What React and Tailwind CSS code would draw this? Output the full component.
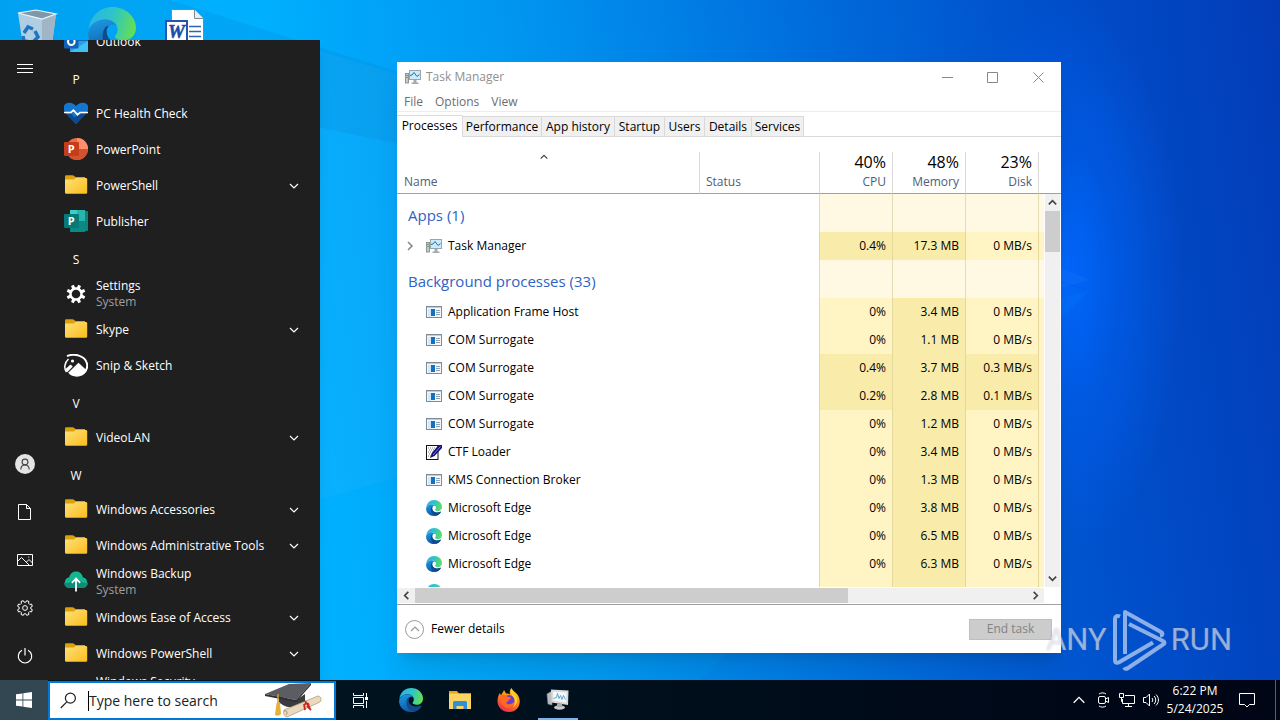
import React from 'react';

const gearPath = (c, outer, inner, teeth) => {
  const step = (Math.PI * 2) / teeth;
  const at = (r, a) => `${(c + r * Math.cos(a)).toFixed(2)} ${(c + r * Math.sin(a)).toFixed(2)}`;
  let d = '';
  for (let i = 0; i < teeth; i++) {
    const a = i * step + step / 2;
    d += `${i ? 'L' : 'M'}${at(inner, a - step * 0.3)}L${at(outer, a - step * 0.2)}L${at(outer, a + step * 0.2)}L${at(inner, a + step * 0.3)}`;
  }
  return `${d}Z`;
};

const Chevron = ({ dir = 'down', className = 'size-3', width = 1.2 }) => {
  const paths = {
    down: 'M2 4l4 4 4-4',
    up: 'M2 8l4-4 4 4',
    left: 'M8 2L4 6l4 4',
    right: 'M4 2l4 4-4 4',
  };
  return (
    <svg viewBox="0 0 12 12" className={className} fill="none" stroke="currentColor" strokeWidth={width} aria-hidden="true">
      <path d={paths[dir]} />
    </svg>
  );
};

const EdgeIcon = ({ id, className }) => (
  <svg viewBox="0 0 24 24" className={className} aria-hidden="true">
    <defs>
      <linearGradient id={`${id}-top`} x1="0" y1="0.4" x2="1" y2="0.6">
        <stop offset="0" stopColor="#2bb4e8" />
        <stop offset="0.5" stopColor="#2fc6c4" />
        <stop offset="1" stopColor="#66e04e" />
      </linearGradient>
      <linearGradient id={`${id}-mid`} x1="0" y1="0" x2="0.4" y2="1">
        <stop offset="0" stopColor="#1f9be4" />
        <stop offset="1" stopColor="#0c59a8" />
      </linearGradient>
    </defs>
    <path d="M0.3 11.2C1 4.6 6 0 12.2 0 18.8 0 24 4.800 24 10.400c0 4-2.900 6.300-6.300 6.300-2.700 0-4.200-1-4.200-1.900 0-.7 1.300-1.200 1.300-3.400C14.800 8.500 12 6.300 8.600 6.300 4.700 6.300 1.400 8.600.3 11.200z" fill={`url(#${id}-top)`} />
    <path d="M8.600 6.300C4.400 6.300.5 9.200.1 13 0 19 5 24 12 24c4.500 0 8.300-2.400 10.200-5.600.4-.6-.2-.9-.7-.6-4.600 2.500-12.200.3-12.200-5.500 0-1.600.8-2.600 1.800-3.200C12.600 8.200 14 9 14.500 10 13.900 7.900 11.700 6.300 8.600 6.300z" fill={`url(#${id}-mid)`} />
    <path d="M9.200 9.600C6.200 12 6.300 21.500 14 23.800c3.500-.4 6.500-2.600 8.200-5.400.4-.6-.2-.9-.7-.6-4.600 2.500-12.200.3-12.200-5.500 0-1.200.4-2.100 1.100-2.700z" fill="#114a8b" />
  </svg>
);

const FolderIcon = ({ id }) => (
  <svg viewBox="0 0 24 24" className="size-6" aria-hidden="true">
    <defs>
      <linearGradient id={id} x1="0" y1="0" x2="1" y2="1">
        <stop offset="0" stopColor="#ffe07a" />
        <stop offset="1" stopColor="#f9bd1b" />
      </linearGradient>
    </defs>
    <path d="M1 2.500a1.200 1.200 0 0 1 1.200-1.200h6.300c1.500 0 2 1.700 3.500 1.700H21v6H1z" fill="#d9a20a" />
    <path d="M1 5.500h8.500c1 0 1.300-1.500 2.700-1.500H22a1.200 1.200 0 0 1 1.200 1.200v13.300A1.200 1.200 0 0 1 22 19.700H2.200A1.200 1.200 0 0 1 1 18.500z" fill={`url(#${id})`} />
  </svg>
);

const OutlookIcon = () => (
  <svg viewBox="0 0 24 24" className="size-6" aria-hidden="true">
    <rect x="6" y="1" width="18" height="14" fill="#0f6cbd" />
    <path d="M6 11h18v11H6z" fill="#2a9fe8" />
    <path d="M6 22L24 11v11z" fill="#50d9ff" opacity="0.6" />
    <rect x="0" y="5" width="14.500" height="13.500" rx="1" fill="#0f62b5" />
    <circle cx="7.300" cy="11.700" r="3.300" fill="none" stroke="#fff" strokeWidth="2" />
  </svg>
);

const HealthIcon = () => (
  <svg viewBox="0 0 24 24" className="size-6" aria-hidden="true">
    <path d="M12 22L1.800 11.500C-2.200 6-.3 1 5 .8 8 .7 10.500 2 12 4c1.500-2 4-3.300 7-3.200C24.300 1 26.200 6 22.200 11.500z" fill="#1476cf" />
    <path d="M2.500 12h5l3 3.500 4.500-4h7L12 22z" fill="#0c4b93" />
    <path d="M0 10.500h7l2.500-2.300 4 4.500 2.500-2.200H24" fill="none" stroke="#fff" strokeWidth="1.700" />
  </svg>
);

const PowerPointIcon = () => (
  <svg viewBox="0 0 24 24" className="size-6" aria-hidden="true">
    <circle cx="13" cy="11" r="11" fill="#ed6c47" />
    <path d="M13 0a11 11 0 0 1 11 11H13z" fill="#ff8f6b" />
    <path d="M2 11h22a11 11 0 0 1-22 0z" fill="#d35230" />
    <rect x="0" y="4" width="15" height="14" rx="1" fill="#c43e1c" />
    <text x="7.200" y="15" textAnchor="middle" fontSize="11" fontWeight="700" fill="#fff">P</text>
  </svg>
);

const PublisherIcon = () => (
  <svg viewBox="0 0 24 24" className="size-6" aria-hidden="true">
    <rect x="16" y="1" width="8" height="20" rx="1" fill="#12827c" />
    <rect x="6" y="0" width="15" height="11" fill="#3ad0c9" />
    <rect x="13" y="0" width="8" height="11" fill="#27b6ae" />
    <rect x="6" y="11" width="15" height="11" fill="#0b8a84" />
    <rect x="0" y="4" width="15" height="14" rx="1" fill="#067a76" />
    <text x="7.200" y="15" textAnchor="middle" fontSize="11" fontWeight="700" fill="#fff">P</text>
  </svg>
);

const SettingsAppIcon = () => (
  <svg viewBox="0 0 24 24" className="size-6" aria-hidden="true">
    <path d={`${gearPath(12, 9.5, 6.8, 8)}M16.300 12a4.300 4.300 0 1 0-8.600 0 4.300 4.300 0 1 0 8.600 0z`} fill="#fff" fillRule="evenodd" />
  </svg>
);

const SnipIcon = () => (
  <svg viewBox="0 0 24 24" className="size-6" aria-hidden="true">
    <path d="M3 2.200C10-1 21 1.500 23 9.500c.8 4-1.400 8-4 10" fill="none" stroke="#fff" strokeWidth="2" />
    <path d="M4.500 5C.3 8.800-.3 14.300 2.500 18" fill="none" stroke="#fff" strokeWidth="1.500" />
    <circle cx="8.500" cy="7" r="1.600" fill="#fff" />
    <path d="M1.500 15l5-4.500 2.300 2-5.600 5.700zM4.200 18.800l10.300-10 8.300 7.700c-3.500 7.500-14 8-18.600 2.300z" fill="#fff" />
  </svg>
);

const BackupIcon = () => (
  <svg viewBox="0 0 24 24" className="size-6" aria-hidden="true">
    <path d="M5.500 18a5.500 5.500 0 0 1-.3-10.800C6.200 3.500 8.700 1.500 12 1.500s6 2 6.800 5.700A5.500 5.500 0 0 1 18.500 18z" fill="#14b58f" />
    <path d="M0 12.500c7 2.500 8-4 12-4s6 6.500 12 4c0 3.500-2.500 5.500-5.500 5.500h-13C2.500 18 0 16 0 12.500z" fill="#0b8d78" />
    <path d="M12 21.500V9M7.800 12.800L12 8.600l4.200 4.200" fill="none" stroke="#fff" strokeWidth="1.800" />
  </svg>
);

const TaskManagerIcon = ({ className = 'size-4' }) => (
  <svg viewBox="0 0 16 16" className={className} aria-hidden="true">
    <rect x="0.500" y="4.500" width="3" height="9.500" fill="#c6cbc6" stroke="#7d8580" strokeWidth="0.800" />
    <path d="M1 6.500h2M1 8.500h2" stroke="#5f8f5f" strokeWidth="0.800" />
    <rect x="4.500" y="1.500" width="11" height="9" fill="#eaf5fb" stroke="#9aa5ad" />
    <rect x="5" y="2" width="10" height="8" fill="#cdeafa" />
    <path d="M5 6.500l2-.5 2-2.500 3 4 2.500-2" fill="none" stroke="#1878a8" />
    <path d="M8.500 11h3v2.500h2v1.500h-7v-1.500h2z" fill="#a3abb0" />
  </svg>
);

const ProcessIcon = () => (
  <svg viewBox="0 0 16 16" className="size-4" shapeRendering="crispEdges" aria-hidden="true">
    <rect x="0.500" y="2.500" width="15" height="11" fill="#f2f8fc" stroke="#7f8c96" />
    <rect x="1" y="3" width="14" height="1" fill="#c3ced6" />
    <rect x="2" y="5" width="3" height="8" fill="#d3e9f8" />
    <rect x="5" y="5" width="4" height="7" fill="#1470c0" />
    <path d="M10 6.500h4M10 8.500h4M10 10.500h4" stroke="#8fa1ae" />
  </svg>
);

const CtfIcon = () => (
  <svg viewBox="0 0 16 16" className="size-4" aria-hidden="true">
    <rect x="0.500" y="1.500" width="11.500" height="14" fill="#fff" stroke="#111" />
    <path d="M2 4h8M3 6h6M2 8h6M3 10h3M2 12h3" stroke="#555" strokeWidth="0.800" strokeDasharray="1 1" />
    <path d="M4 14l2-5L12.500 1H16v3L8.500 12z" fill="#10107c" />
    <path d="M7 11l7.500-8.500" stroke="#9a9ee0" strokeWidth="0.800" />
  </svg>
);

const menuItems = [
  { label: 'Outlook', icon: <OutlookIcon /> },
  { header: 'P' },
  { label: 'PC Health Check', icon: <HealthIcon /> },
  { label: 'PowerPoint', icon: <PowerPointIcon /> },
  { label: 'PowerShell', folder: true },
  { label: 'Publisher', icon: <PublisherIcon /> },
  { header: 'S' },
  { label: 'Settings', sub: 'System', icon: <SettingsAppIcon /> },
  { label: 'Skype', folder: true },
  { label: 'Snip & Sketch', icon: <SnipIcon /> },
  { header: 'V' },
  { label: 'VideoLAN', folder: true },
  { header: 'W' },
  { label: 'Windows Accessories', folder: true },
  { label: 'Windows Administrative Tools', folder: true },
  { label: 'Windows Backup', sub: 'System', icon: <BackupIcon /> },
  { label: 'Windows Ease of Access', folder: true },
  { label: 'Windows PowerShell', folder: true },
  { label: 'Windows Security', sub: 'System' },
];

const railIcons = [
  {
    label: 'Account',
    icon: (
      <svg viewBox="0 0 20 20" className="size-5" aria-hidden="true">
        <circle cx="10" cy="10" r="10" fill="#e4e4e4" />
        <g fill="none" stroke="#444" strokeWidth="1.100">
          <circle cx="10" cy="8" r="2.900" />
          <path d="M5.800 15.500c.2-6 8.200-6 8.400 0" />
        </g>
      </svg>
    ),
  },
  {
    label: 'Documents',
    icon: (
      <svg viewBox="0 0 16 16" className="size-4" fill="none" stroke="#fff" aria-hidden="true">
        <path d="M1.500.5h8l4 4v11h-12zM9.500.5v4h4" />
      </svg>
    ),
  },
  {
    label: 'Pictures',
    icon: (
      <svg viewBox="0 0 16 16" className="size-4" fill="none" stroke="#fff" aria-hidden="true">
        <path d="M.5 2.500h15v11H.5zM.5 9.500l4-4 7.500 7.500M9.500 10l2.500-2.500 3.500 3.500" />
        <circle cx="11.800" cy="5" r="0.600" fill="#fff" stroke="none" />
      </svg>
    ),
  },
  {
    label: 'Settings',
    icon: (
      <svg viewBox="0 0 16 16" className="size-4" fill="none" stroke="#fff" aria-hidden="true">
        <path d={gearPath(8, 7.6, 5.9, 8)} />
        <circle cx="8" cy="8" r="2.400" />
      </svg>
    ),
  },
  {
    label: 'Power',
    icon: (
      <svg viewBox="0 0 16 16" className="size-4" fill="none" stroke="#fff" strokeWidth="1.200" aria-hidden="true">
        <path d="M8 0v7.500M5 2.300a6.700 6.700 0 1 0 6 0" />
      </svg>
    ),
  },
];

const StartMenu = () => (
  <nav aria-label="Start" className="absolute bottom-0 left-0 top-10 flex w-80 bg-[#1f1f1f] text-xs text-white shadow-lg">
    <div className="flex w-12 flex-col">
      <button aria-label="Expand" className="flex h-[58px] w-[50px] items-center justify-center">
        <svg viewBox="0 0 16 10" className="h-[10px] w-4" stroke="#fff" aria-hidden="true">
          <path d="M0 .5h16M0 4.500h16M0 8.500h16" />
        </svg>
      </button>
      <div className="mt-auto">
        {railIcons.map((item) => (
          <button key={item.label} aria-label={item.label} className="flex h-12 w-[50px] items-center justify-center">
            {item.icon}
          </button>
        ))}
      </div>
    </div>
    <div className="min-w-0 flex-1 overflow-hidden">
      <ul className="-mt-4">
        {menuItems.map((item) => (
          <li key={item.header || item.label} className="h-9">
            {item.header ? (
              <button className="flex h-9 w-14 items-center justify-center pt-1">{item.header}</button>
            ) : (
              <button className="flex h-9 w-full items-center gap-2 pl-4 pr-5 text-left">
                <span className="size-6">{item.folder ? <FolderIcon id={`folder-${item.label.replace(/ /g, '-')}`} /> : item.icon}</span>
                <span className="flex-1 whitespace-nowrap leading-4">
                  {item.label}
                  {item.sub && <span className="block text-[#9f9f9f]">{item.sub}</span>}
                </span>
                {item.folder && <Chevron />}
              </button>
            )}
          </li>
        ))}
      </ul>
    </div>
  </nav>
);

const tabs = [
  { label: 'Performance', width: 'w-[79px]' },
  { label: 'App history', width: 'w-[73px]' },
  { label: 'Startup', width: 'w-[50px]' },
  { label: 'Users', width: 'w-[40px]' },
  { label: 'Details', width: 'w-[47px]' },
  { label: 'Services', width: 'w-[52px]' },
];

const processes = [
  { name: 'Application Frame Host', cpu: '0%', memory: '3.4 MB', disk: '0 MB/s' },
  { name: 'COM Surrogate', cpu: '0%', memory: '1.1 MB', disk: '0 MB/s' },
  { name: 'COM Surrogate', cpu: '0.4%', memory: '3.7 MB', disk: '0.3 MB/s' },
  { name: 'COM Surrogate', cpu: '0.2%', memory: '2.8 MB', disk: '0.1 MB/s' },
  { name: 'COM Surrogate', cpu: '0%', memory: '1.2 MB', disk: '0 MB/s' },
  { name: 'CTF Loader', icon: 'ctf', cpu: '0%', memory: '3.4 MB', disk: '0 MB/s' },
  { name: 'KMS Connection Broker', cpu: '0%', memory: '1.3 MB', disk: '0 MB/s' },
  { name: 'Microsoft Edge', icon: 'edge', cpu: '0%', memory: '3.8 MB', disk: '0 MB/s' },
  { name: 'Microsoft Edge', icon: 'edge', cpu: '0%', memory: '6.5 MB', disk: '0 MB/s' },
  { name: 'Microsoft Edge', icon: 'edge', cpu: '0%', memory: '6.3 MB', disk: '0 MB/s' },
  { name: '', icon: 'edge', cpu: '', memory: '', disk: '' },
];

const heat = (value) => (value.startsWith('0 ') || value === '0%' || value === '' ? 'bg-[#fff4c4]' : 'bg-[#f9ecaa]');

const ProcessRow = ({ process, index, expandable }) => (
  <tr className="h-7">
    <td colSpan={2} className="p-0">
      <div className="flex items-center pl-[7px]">
        <span className="w-[22px] text-[#8a8a8a]">{expandable && <Chevron dir="right" width={1.6} />}</span>
        <span className="mr-[6px]">
          {process.icon === 'edge' && <EdgeIcon id={`edge-${index}`} className="size-4" />}
          {process.icon === 'ctf' && <CtfIcon />}
          {process.icon === 'taskmgr' && <TaskManagerIcon />}
          {!process.icon && <ProcessIcon />}
        </span>
        {process.name}
      </div>
    </td>
    <td className={`border-l border-[#e6d79c] p-0 pr-[6px] text-right ${heat(process.cpu)}`}>{process.cpu}</td>
    <td className="border-l border-[#e6d79c] bg-[#f9ecaa] p-0 pr-[6px] text-right">{process.memory}</td>
    <td className={`border-l border-[#e6d79c] p-0 pr-[6px] text-right ${heat(process.disk)}`}>{process.disk}</td>
    <td className="border-l border-[#e6d79c] bg-[#fff4c4] p-0" />
  </tr>
);

const GroupRow = ({ title }) => (
  <tr className="h-[38px]">
    <th colSpan={2} scope="colgroup" className="p-0 pl-[11px] pt-[3px] text-left text-[15px] font-normal leading-5 text-[#2f62c4]">{title}</th>
    {[0, 1, 2, 3].map((i) => (
      <td key={i} className="border-l border-[#e6dcb4] bg-[#fff8e3] p-0" />
    ))}
  </tr>
);

const TaskManager = () => (
  <section aria-label="Task Manager" className="absolute left-[397px] top-[62px] flex h-[591px] w-[664px] flex-col bg-white text-xs text-black shadow-xl">
    <div className="flex h-[30px] items-center pl-2 text-[#8f8f8f]">
      <TaskManagerIcon />
      <h1 className="ml-[5px] flex-1">Task Manager</h1>
      <button aria-label="Minimize" className="flex h-7 w-[45px] items-center justify-center">
        <svg viewBox="0 0 11 11" className="size-[11px]" stroke="#888" aria-hidden="true"><path d="M0 5.500h11" /></svg>
      </button>
      <button aria-label="Maximize" className="flex h-7 w-[45px] items-center justify-center">
        <svg viewBox="0 0 11 11" className="size-[11px]" fill="none" stroke="#888" aria-hidden="true"><path d="M.5.500h10v10H.5z" /></svg>
      </button>
      <button aria-label="Close" className="flex h-7 w-[46px] items-center justify-center">
        <svg viewBox="0 0 11 11" className="size-[11px]" stroke="#888" aria-hidden="true"><path d="M.5.500l10 10M10.500.500l-10 10" /></svg>
      </button>
    </div>
    <div className="flex h-5 items-center gap-3 border-b border-[#ececec] pl-[7px] text-[#6d6d6d]">
      <button>File</button>
      <button>Options</button>
      <button>View</button>
    </div>
    <div role="tablist" className="flex h-[25px] items-end">
      <button role="tab" aria-selected="true" className="flex h-[22px] w-[66px] items-center justify-center self-start border-r border-t border-[#dcdcdc] pb-[2px] mt-[3px]">Processes</button>
      {tabs.map((tab) => (
        <button key={tab.label} role="tab" aria-selected="false" className={`flex h-[21px] items-center justify-center border border-l-0 border-[#d9d9d9] bg-[#f0f0f0] ${tab.width}`}>
          {tab.label}
        </button>
      ))}
      <div className="flex-1 border-b border-[#d9d9d9]" />
    </div>
    <div className="flex min-h-0 flex-1">
      <div className="min-w-0 flex-1 overflow-hidden pt-[15px]">
        <table className="w-full table-fixed border-separate border-spacing-0">
          <colgroup>
            <col />
            <col className="w-[120px]" />
            <col className="w-[73px]" />
            <col className="w-[73px]" />
            <col className="w-[73px]" />
            <col className="w-[6px]" />
          </colgroup>
          <thead>
            <tr className="h-[42px] text-[#4c607a]">
              <th scope="col" className="border-b border-[#a0a0a0] p-0 pl-[7px] text-left align-top font-normal">
                <span className="flex h-5 justify-center pr-4 text-[#444]"><Chevron dir="up" className="size-[10px]" width={1.5} /></span>
                <span className="block leading-5">Name</span>
              </th>
              <th scope="col" className="border-b border-l border-b-[#a0a0a0] border-l-[#d9d9d9] p-0 pl-[6px] pt-5 text-left align-top font-normal leading-5">Status</th>
              {[['40%', 'CPU'], ['48%', 'Memory'], ['23%', 'Disk']].map(([total, label]) => (
                <th key={label} scope="col" className="border-b border-l border-b-[#a0a0a0] border-l-[#d9d9d9] p-0 pr-[6px] text-right align-top font-normal leading-5">
                  <span className="block text-base leading-5 text-black">{total}</span>
                  <span className="block">{label}</span>
                </th>
              ))}
              <td className="border-b border-l border-b-[#a0a0a0] border-l-[#d9d9d9] p-0" />
            </tr>
          </thead>
          <tbody>
            <GroupRow title="Apps (1)" />
            <ProcessRow expandable index="app" process={{ name: 'Task Manager', icon: 'taskmgr', cpu: '0.4%', memory: '17.3 MB', disk: '0 MB/s' }} />
            <GroupRow title="Background processes (33)" />
            {processes.map((process, index) => (
              <ProcessRow key={index} index={index} process={process} />
            ))}
          </tbody>
        </table>
      </div>
      <div className="flex w-[17px] flex-col">
        <div className="h-[57px] border-b border-[#a0a0a0]" />
        <div className="mx-px flex flex-1 flex-col bg-[#f0f0f0] text-[#444]">
          <button aria-label="Scroll up" className="flex h-[17px] items-center justify-center"><Chevron dir="up" width={1.8} className="size-[11px]" /></button>
          <div className="h-[41px] bg-[#cdcdcd]" />
          <button aria-label="Scroll down" className="mt-auto flex h-[17px] items-center justify-center"><Chevron width={1.8} className="size-[11px]" /></button>
        </div>
      </div>
    </div>
    <div className="flex h-[17px] border-t border-white pb-px pr-[17px] text-[#444]">
      <button aria-label="Scroll left" className="flex w-[18px] items-center justify-center bg-[#f0f0f0]"><Chevron dir="left" width={1.8} className="size-[11px]" /></button>
      <div className="w-[433px] bg-[#cdcdcd]" />
      <button aria-label="Scroll right" className="flex flex-1 items-center justify-end bg-[#f0f0f0] pr-[3px]"><Chevron dir="right" width={1.8} className="size-[11px]" /></button>
    </div>
    <div className="flex h-[49px] items-center justify-between border-t border-[#a0a0a0] pl-2 pr-[9px]">
      <button className="flex items-center gap-[7px]">
        <span className="flex size-[19px] items-center justify-center rounded-full border border-[#999] text-[#999]"><Chevron dir="up" /></span>
        Fewer details
      </button>
      <button disabled className="h-[21px] w-[83px] border border-[#bfbfbf] bg-[#cccccc] text-[#838383]">End task</button>
    </div>
  </section>
);

const DesktopIcons = () => (
  <div className="absolute left-0 top-0 flex">
    <a href="#recycle-bin" aria-label="Recycle Bin" className="flex w-[74px] justify-center pt-[7px]">
      <svg viewBox="0 0 48 48" className="size-12" aria-hidden="true">
        <path d="M5 6l38 1-5 38H11z" fill="#c3d3df" opacity="0.900" />
        <path d="M29 12l14-5-5 38-9 2z" fill="#9fb4c4" opacity="0.900" />
        <path d="M5 6l18-3 20 4-14 5z" fill="#7d98ab" stroke="#eef5fa" strokeWidth="1.200" />
        <g fill="none" stroke="#1f74c4" strokeWidth="3.500">
          <path d="M11 26l4-6 5 2M22 24l3 6-4 4M17 35l-6-1-1-5" />
        </g>
      </svg>
    </a>
    <a href="#edge" aria-label="Microsoft Edge" className="flex w-[76px] justify-center pt-[7px]">
      <EdgeIcon id="edge-desktop" className="size-12" />
    </a>
    <a href="#document" aria-label="Word document" className="flex w-[68px] justify-center pt-[7px]">
      <svg viewBox="0 0 48 48" className="size-12" aria-hidden="true">
        <path d="M11.500 2.500h23l9 9v34h-32z" fill="#fff" stroke="#7d8790" />
        <path d="M34.500 2.500v9h9" fill="#e8edf2" stroke="#7d8790" />
        <path d="M29 19.500h12M29 24.500h12M29 29.500h12" stroke="#2b65b8" strokeWidth="1.500" />
        <rect x="6" y="14" width="21" height="21" fill="#fff" stroke="#2456b0" strokeWidth="2" />
        <text x="16.500" y="31" textAnchor="middle" fontSize="19" fontWeight="700" fontStyle="italic" fontFamily="Liberation Serif, serif" fill="#1c4aa8" stroke="#1c4aa8" strokeWidth="0.500">W</text>
      </svg>
    </a>
  </div>
);

const Watermark = () => (
  <div className="pointer-events-none absolute bottom-2 right-12 flex items-center gap-1 font-[Roboto,sans-serif] text-[31px] text-white/55 [text-shadow:0_0_2px_rgba(80,90,120,0.35)]">
    <span>ANY</span>
    <svg viewBox="0 0 56 64" className="h-16 w-14" fill="none" stroke="currentColor" strokeWidth="4" strokeLinejoin="round" aria-hidden="true">
      <path d="M9 8.500C6 7 4 8.500 4 11v41c0 3 2 3.500 4.500 2L42 34.500M14 46V4l36 20c2 1.200 2 3-1 3.500M18 16l34 17c2 1 2 2.500 0 3.500L17 60c-1.500 1-3 1-4-.5" />
    </svg>
    <span>RUN</span>
  </div>
);

const Taskbar = () => (
  <footer className="flex h-10 bg-linear-to-r from-[#001822] to-[#000616] text-xs text-white">
    <button aria-label="Start" className="flex w-12 items-center justify-center bg-[#324752]">
      <svg viewBox="0 0 16 16" className="size-4" fill="#fff" aria-hidden="true">
        <path d="M0 2.300l6.500-.9v6.200H0zM7.300 1.300L16 0v7.600H7.300zM0 8.400h6.500v6.200L0 13.700zM7.300 8.400H16V16l-8.700-1.200z" />
      </svg>
    </button>
    <label className="mt-px flex w-72 items-center border-2 border-[#0078d7] bg-white pl-[10px] pr-[10px] text-black">
      <svg viewBox="0 0 18 18" className="size-[17px] shrink-0" fill="none" stroke="#222" strokeWidth="1.300" aria-hidden="true">
        <circle cx="11" cy="6.500" r="5.300" />
        <path d="M7.200 10.500L.8 17" />
      </svg>
      <span className="ml-[11px] h-5 w-px bg-black" />
      <input type="text" aria-label="Search" placeholder="Type here to search" className="min-w-0 flex-1 text-sm text-black outline-none placeholder:text-[#222]" />
      <svg viewBox="0 0 60 36" className="h-9 w-[60px] shrink-0" aria-hidden="true">
        <path d="M15 13l16 5 10-7v9c-6 6-20 6-26-1z" fill="#3b3c40" />
        <path d="M1 11L25 1l22-1-15 17z" fill="#5c5d62" />
        <path d="M1 11l31 6 15-17v2L32 19 1 13z" fill="#2f3034" />
        <path d="M14 11v11" stroke="#d49c25" strokeWidth="1.500" />
        <path d="M12.500 20h3.500l1 11c-2 2-4 2-6 1z" fill="#e6b13a" />
        <path d="M20 27l34-14c3 0 4 4 2 6L23 34c-3 0-4-5-3-7z" fill="#ead9bf" stroke="#b79d79" strokeWidth="0.800" />
        <path d="M20 28c3-1 4 2 2 4" fill="none" stroke="#a58a66" />
        <path d="M41 18l5 7M40 22c3-3 6-1 4 1M40 21l1 6M43 23l4 4" fill="none" stroke="#c8281e" strokeWidth="1.800" />
      </svg>
    </label>
    <div className="flex gap-px">
      <button aria-label="Task view" className="flex w-[50px] items-center justify-center">
        <svg viewBox="0 0 16 16" className="size-4" fill="none" stroke="#fff" aria-hidden="true">
          <path d="M.5 1v2.500h10V1M.5 5.500h10v6H.5zM.5 16v-2.500h10V16M13.500 1v4M13.500 9v7" />
          <rect x="12" y="5" width="3" height="3" fill="#fff" stroke="none" />
        </svg>
      </button>
      <button aria-label="Microsoft Edge" className="flex w-12 items-center justify-center">
        <EdgeIcon id="edge-taskbar" className="size-6" />
      </button>
      <button aria-label="File Explorer" className="flex w-12 items-center justify-center">
        <svg viewBox="0 0 24 24" className="size-6" aria-hidden="true">
          <path d="M1 3h8l2 2.500h12V9H1z" fill="#f0a30a" />
          <path d="M1 5.500h22v15.500H1z" fill="#fcd462" />
          <path d="M5 21v-6.500A1.500 1.500 0 0 1 6.500 13h11a1.500 1.500 0 0 1 1.500 1.500V21h-3.500v-3h-7v3z" fill="#2f8fd8" />
        </svg>
      </button>
      <button aria-label="Firefox" className="flex w-12 items-center justify-center">
        <svg viewBox="0 0 24 24" className="size-6" aria-hidden="true">
          <defs>
            <linearGradient id="fox-body" x1="0.800" y1="0" x2="0.300" y2="1">
              <stop offset="0" stopColor="#ffe226" />
              <stop offset="0.450" stopColor="#ff8a16" />
              <stop offset="1" stopColor="#f0274f" />
            </linearGradient>
          </defs>
          <path d="M14.500 0c1 3 3.500 3.500 5.500 6 5.500 6.500 2.500 18-8 18C5 24 .5 19 .5 13c0-3.500 1-6 2.500-8l1 2.500C5 4.500 6.500 4 7 2l2 3.500c2 0 3 .5 4 1-.5-2.500 0-5 1.500-6.500z" fill="url(#fox-body)" />
          <circle cx="12" cy="12.500" r="5.500" fill="#6b3bd6" />
          <path d="M4 8c3-2 5-1 7 1 1.500.3 3 .5 3 1.300 0 1-2 1.200-2.600 2.200-.5 1.500-2 1.500-2.400 2 1 2.500 6 2.500 8-1 0 4-3 6-6 6-5 0-8-5-7-11.500z" fill="#ff6a1f" />
          <path d="M14.500 1c1 4 4.500 5 5.500 10 .5 4-1.500 7-4 8 2.500-3 2.500-7 .5-10-2-1.500-3-4-2-8z" fill="#ffcf2e" />
        </svg>
      </button>
      <button aria-label="Task Manager" className="flex w-12 items-center justify-center">
        <span className="flex h-10 w-10 items-center justify-center border-b-2 border-[#7fb4ea]">
          <svg viewBox="0 0 24 24" className="size-6" aria-hidden="true">
            <path d="M1 7l5-3v14l-4-1z" fill="#b9bdbf" stroke="#8b9093" strokeWidth="0.600" />
            <path d="M5 2.500l17.500 1L22 18 5.500 15.500z" fill="#d8dadb" />
            <path d="M7 4.500l13.500 1L20 15.500 7.500 13.500z" fill="#f3f8fa" />
            <path d="M7.500 11.500l3-1 1-4 1.500 5 1.500-3 1.500 4 1.500-4 2 4" fill="none" stroke="#4f9ec4" strokeWidth="0.900" />
            <ellipse cx="13.500" cy="20.500" rx="5.500" ry="2.200" fill="#c8cbcc" />
            <path d="M11 16.500h5v3.500h-5z" fill="#a9adaf" />
          </svg>
        </span>
      </button>
    </div>
    <div className="ml-auto flex">
      <button aria-label="Show hidden icons" className="flex w-6 items-center justify-center"><Chevron dir="up" className="size-4" width={1} /></button>
      <button aria-label="Meet Now" className="flex w-6 items-center justify-center">
        <svg viewBox="0 0 16 16" className="size-4" fill="none" stroke="#fff" aria-hidden="true">
          <rect x="3.500" y="4.500" width="7" height="7" rx="1.500" />
          <path d="M10.500 7l3-1.500v5l-3-1.500M4 2c2-1.500 5-1.500 7 0M4 14c2 1.500 5 1.500 7 0" />
        </svg>
      </button>
      <button aria-label="Network" className="flex w-6 items-center justify-center">
        <svg viewBox="0 0 16 16" className="size-4" fill="none" stroke="#fff" aria-hidden="true">
          <path d="M6 3.500h9.500v8h-12V7M9.500 11.500v3M6 14.500h7M.5 1.500h4v4h-4zM2.500 5.500v4h1" />
        </svg>
      </button>
      <button aria-label="Volume" className="flex w-6 items-center justify-center">
        <svg viewBox="0 0 16 16" className="size-4" fill="none" stroke="#fff" aria-hidden="true">
          <path d="M.5 5.500h2.500l3.500-3.500v12L3 10.500H.5zM9 6c1 1.300 1 2.700 0 4M11 4c2.300 2.500 2.300 5.500 0 8M13 2.500c3.300 3.500 3.300 7.500 0 11" />
        </svg>
      </button>
      <button className="w-16 whitespace-nowrap text-center leading-[18px]">
        <span className="block">6:22 PM</span>
        <span className="block">5/24/2025</span>
      </button>
      <button aria-label="Notifications" className="mr-2 flex w-10 items-center justify-center">
        <svg viewBox="0 0 16 16" className="size-4" fill="none" stroke="#fff" aria-hidden="true">
          <path d="M.5 1.500h15v11h-5L8 15l-2.500-2.500h-5z" />
        </svg>
      </button>
      <button aria-label="Show desktop" className="w-[5px] border-l border-[#56606a]" />
    </div>
  </footer>
);

const Wallpaper = () => (
  <svg viewBox="0 0 1280 680" preserveAspectRatio="none" className="absolute inset-0 size-full" aria-hidden="true">
    <path d="M170 0L1090 290 0 60V0z" fill="#003a90" opacity="0.080" />
    <path d="M300 45L400 75 560 62 1090 280 320 500z" fill="#fff" opacity="0.030" />
    <path d="M320 500L1090 290 700 680H320z" fill="#00c8ff" opacity="0.060" />
  </svg>
);

export default function App() {
  return (
    <div className="flex h-screen flex-col overflow-hidden font-['Open_Sans',sans-serif]">
      <main className="relative flex-1 overflow-hidden bg-[radial-gradient(ellipse_120px_280px_at_83%_41%,#0068ff_0%,#0060f099_45%,transparent_100%),linear-gradient(82deg,#00a8f8_0%,#00b0ff_25%,#0096f0_44%,#006cdc_66%,#0050cc_82%,#033bb6_100%)]">
        <Wallpaper />
        <DesktopIcons />
        <TaskManager />
        <StartMenu />
        <Watermark />
      </main>
      <Taskbar />
    </div>
  );
}
